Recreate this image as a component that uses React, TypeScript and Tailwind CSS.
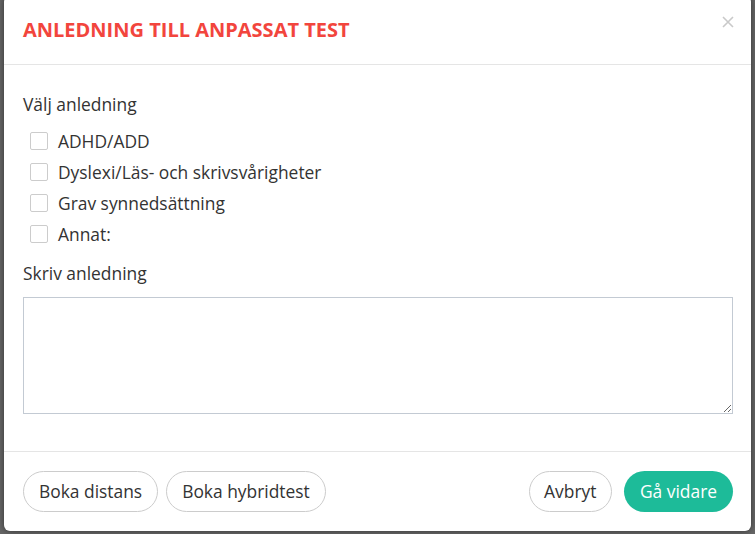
import React from "react";

const options = ["ADHD/ADD", "Dyslexi/Läs- och skrivsvårigheter", "Grav synnedsättning", "Annat:"];

export default function App() {
  return (
    <div
      className="w-[755px] h-[534px] bg-[#666666] overflow-hidden relative"
      style={{ fontFamily: '"Open Sans", sans-serif' }}
    >
      <div className="absolute left-[4px] top-[-4px] w-[747px] h-[535px] bg-white rounded-[6px] shadow-[0_0_6px_rgba(0,0,0,0.5)] flex flex-col text-[#333333]">
        <div className="h-[69px] border-b border-[#e5e5e5] flex items-center justify-between pl-[19px] pr-[17px] shrink-0">
          <h1 className="text-[20px] font-bold text-[#f2453d] leading-none">ANLEDNING TILL ANPASSAT TEST</h1>
          <svg width="12" height="12" viewBox="0 0 12 12" className="self-start mt-[20px]">
            <path d="M1 1L11 11M11 1L1 11" stroke="#c9c9c9" strokeWidth="1.6" />
          </svg>
        </div>
        <div className="flex flex-col pl-[19px] pr-[18px] pt-[27px] pb-[37px] shrink-0">
          <div className="text-[17.4px] leading-[24px]">Välj anledning</div>
          <div className="mt-[9px] flex flex-col pl-[7px]">
            {options.map((o) => (
              <label key={o} className="h-[31px] flex items-center gap-[10px] text-[17.4px] leading-[24px]">
                <span className="w-[18px] h-[18px] border border-[#cccccc] rounded-[2px] bg-white shrink-0" />
                <span>{o}</span>
              </label>
            ))}
          </div>
          <div className="mt-[12px] text-[17.4px] leading-[24px]">Skriv anledning</div>
          <textarea className="mt-[12px] w-full h-[117px] border border-[#c3cad3] outline-none resize-y" />
        </div>
        <div className="border-t border-[#e5e5e5] flex items-center justify-between pl-[19px] pr-[18px] pt-[19px] pb-[19px]">
          <div className="flex gap-[8px]">
            <button className="h-[41px] px-[15px] rounded-full border border-[#cccccc] bg-white text-[17.4px] text-[#333333]">Boka distans</button>
            <button className="h-[41px] px-[15px] rounded-full border border-[#cccccc] bg-white text-[17.4px] text-[#333333]">Boka hybridtest</button>
          </div>
          <div className="flex gap-[12px]">
            <button className="h-[41px] px-[14.5px] rounded-full border border-[#cccccc] bg-white text-[17.4px] text-[#333333]">Avbryt</button>
            <button className="h-[41px] px-[16px] rounded-full bg-[#1dbb99] text-[17.4px] text-white">Gå vidare</button>
          </div>
        </div>
      </div>
    </div>
  );
}
